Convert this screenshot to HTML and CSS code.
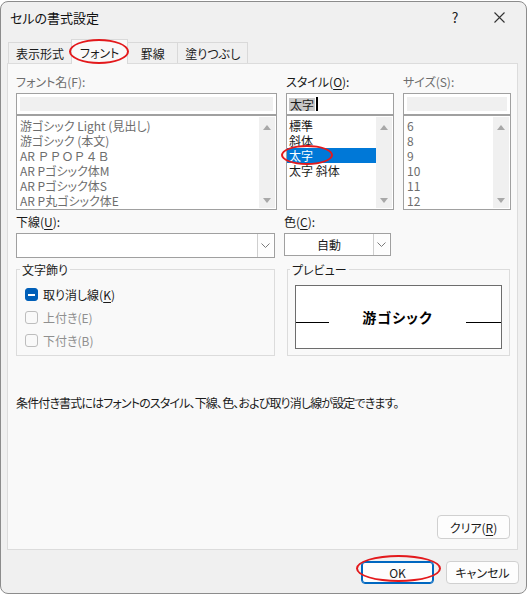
FILE: index.html
```html
<!DOCTYPE html>
<html lang="ja">
<head>
<meta charset="utf-8">
<title>セルの書式設定</title>
<link rel="stylesheet" href="styles.css">
</head>
<body>
<div class="dialog">
  <div class="titlebar">
    <span class="title">セルの書式設定</span>
    <span class="help">?</span>
    <svg class="close" width="11" height="11" viewBox="0 0 11 11"><path d="M0.5 0.5 L10.5 10.5 M10.5 0.5 L0.5 10.5" stroke="#333" stroke-width="1.1" fill="none"/></svg>
  </div>

  <div class="tabs">
    <div class="tab">表示形式</div>
    <div class="tab active">フォント</div>
    <div class="tab">罫線</div>
    <div class="tab">塗りつぶし</div>
  </div>

  <div class="panel">
    <div class="fonts">
      <div class="col">
        <div class="label dim">フォント名(F):</div>
        <div class="input disabled"><div class="fill"></div></div>
        <div class="list dim">
          <div class="items">
            <div class="item">游ゴシック Light (見出し)</div>
            <div class="item">游ゴシック (本文)</div>
            <div class="item wide">AR ＰＰＯＰ４Ｂ</div>
            <div class="item">AR Pゴシック体M</div>
            <div class="item">AR Pゴシック体S</div>
            <div class="item">AR P丸ゴシック体E</div>
          </div>
          <div class="scroll"><span class="up"></span><span class="down"></span></div>
        </div>
      </div>
      <div class="col">
        <div class="label">スタイル(<u>O</u>):</div>
        <div class="input"><span class="sel">太字</span><span class="caret"></span></div>
        <div class="list">
          <div class="items">
            <div class="item">標準</div>
            <div class="item">斜体</div>
            <div class="item selected">太字</div>
            <div class="item">太字 斜体</div>
          </div>
          <div class="scroll"><span class="up"></span><span class="down"></span></div>
        </div>
      </div>
      <div class="col">
        <div class="label dim">サイズ(S):</div>
        <div class="input disabled"><div class="fill"></div></div>
        <div class="list dim">
          <div class="items">
            <div class="item">6</div>
            <div class="item">8</div>
            <div class="item">9</div>
            <div class="item">10</div>
            <div class="item">11</div>
            <div class="item">12</div>
          </div>
          <div class="scroll"><span class="up"></span><span class="down"></span></div>
        </div>
      </div>
    </div>

    <div class="row2">
      <div class="underline-field">
        <div class="label">下線(<u>U</u>):</div>
        <div class="combo">
          <div class="combo-text"></div>
          <div class="combo-btn"><svg width="9" height="5" viewBox="0 0 9 5"><path d="M0.5 0.5 L4.5 4.5 L8.5 0.5" stroke="#7a7a7a" fill="none"/></svg></div>
        </div>
      </div>
      <div class="color-field">
        <div class="label">色(<u>C</u>):</div>
        <div class="combo small">
          <div class="combo-text center">自動</div>
          <div class="combo-btn"><svg width="9" height="5" viewBox="0 0 9 5"><path d="M0.5 0.5 L4.5 4.5 L8.5 0.5" stroke="#7a7a7a" fill="none"/></svg></div>
        </div>
      </div>
    </div>

    <div class="row3">
      <fieldset class="group effects">
        <legend>文字飾り</legend>
        <div class="check-row"><span class="box checked"></span><span>取り消し線(<u>K</u>)</span></div>
        <div class="check-row disabled"><span class="box"></span><span>上付き(E)</span></div>
        <div class="check-row disabled"><span class="box"></span><span>下付き(B)</span></div>
      </fieldset>
      <fieldset class="group preview">
        <legend>プレビュー</legend>
        <div class="preview-box">
          <span class="base left"></span>
          <span class="sample">游ゴシック</span>
          <span class="base right"></span>
        </div>
      </fieldset>
    </div>

    <p class="note">条件付き書式にはフォントのスタイル、下線、色、および取り消し線が設定できます。</p>

    <button class="btn clear">クリア(<u>R</u>)</button>
  </div>

  <div class="footer">
    <button class="btn default">OK</button>
    <button class="btn">キャンセル</button>
  </div>

  <span class="mark mark-tab"></span>
  <span class="mark mark-bold"></span>
  <span class="mark mark-ok"></span>
</div>
</body>
</html>
```
FILE: styles.css
```css
* { box-sizing: border-box; }
html, body { margin: 0; padding: 0; }
body {
  width: 527px;
  height: 595px;
  overflow: hidden;
  background: #ffffff;
  font-family: "Noto Sans CJK JP", "Noto Sans", sans-serif;
  font-size: 12px;
  color: #1a1a1a;
  font-feature-settings: "palt";
}
u { text-underline-offset: 2px; text-decoration-thickness: 1px; }

.dialog {
  position: relative;
  margin-top: 1px;
  width: 527px;
  height: 593px;
  background: #f0f0f0;
  border: 1px solid #8c8c8c;
  border-radius: 8px;
  display: flex;
  flex-direction: column;
}

.titlebar {
  height: 30px;
  display: flex;
  align-items: center;
  padding: 0 21px 0 9px;
}
.title { flex: 1; font-size: 13px; color: #111; }
.help { width: 20px; text-align: center; font-size: 14px; margin-right: 29px; color: #222; }
.close { display: block; }

.tabs {
  display: flex;
  align-items: flex-end;
  height: 24px;
  margin-top: 7px;
  padding-left: 7px;
}
.tab {
  height: 21px;
  min-width: 51px;
  padding: 0 7px;
  border: 1px solid #d9d9d9;
  border-bottom: none;
  background: #f0f0f0;
  display: flex;
  align-items: center;
  justify-content: center;
  margin-left: -1px;
  white-space: nowrap;
}
.tab:first-child { margin-left: 0; }
.tab.active {
  height: 25px;
  margin-bottom: -1px;
  background: #f9f9f9;
  position: relative;
  z-index: 1;
  padding: 0 8px;
}

.panel {
  margin-left: 6px;
  width: 511px;
  height: 487px;
  background: #f9f9f9;
  border: 1px solid #dcdcdc;
  padding: 9px 7px 10px 8px;
  display: flex;
  flex-direction: column;
}

.fonts {
  display: grid;
  grid-template-columns: 261px 108px 108px;
  column-gap: 9px;
}
.label {
  height: 18px;
  line-height: 18px;
  margin-bottom: 2px;
  white-space: nowrap;
}
.dim { color: #6d6d6d; }

.input {
  height: 22px;
  border: 1px solid #a0a0a0;
  background: #ffffff;
  padding: 3px;
  display: flex;
  align-items: center;
}
.input .fill { width: 100%; height: 100%; background: #f0f0f0; }
.input .sel { background: #c8c8c8; line-height: 13px; padding: 0 1px; margin-left: -1px; }
.input .caret { width: 2px; height: 14px; background: #000; margin-left: 1px; }

.list {
  height: 95px;
  border: 1px solid #a0a0a0;
  background: #ffffff;
  display: flex;
}
.items { flex: 1; padding-top: 2px; overflow: hidden; }
.item {
  height: 15px;
  line-height: 15px;
  padding-left: 2px;
  white-space: nowrap;
}
.list.dim .item { padding-left: 3px; }
.item.wide { font-feature-settings: normal; }
.item.selected { background: #0078d7; color: #ffffff; }
.scroll {
  width: 16px;
  margin: 1px 1px 1px 0;
  background: #f0f0f0;
  display: flex;
  flex-direction: column;
  justify-content: space-between;
  align-items: center;
  padding: 8px 0 5px;
}
.up, .down { width: 0; height: 0; border-left: 4px solid transparent; border-right: 4px solid transparent; }
.up { border-bottom: 5px solid #a8a8a8; }
.down { border-top: 5px solid #a8a8a8; }

.row2 { display: flex; gap: 9px; margin-top: 3px; }
.underline-field { width: 259px; }
.color-field { width: 107px; }
.combo {
  height: 25px;
  border: 1px solid #a0a0a0;
  background: #ffffff;
  display: flex;
}
.combo.small { height: 23px; margin-top: 1px; }
.combo-text { flex: 1; line-height: 21px; }
.combo-text.center { text-align: center; }
.combo-btn {
  width: 16px;
  margin: 0 1px 0 0;
  border-left: 1px solid #cfcfcf;
  background: #fdfdfd;
  display: flex;
  align-items: center;
  justify-content: center;
}

.row3 { display: flex; gap: 12px; margin-top: 4px; }
.group {
  margin: 0;
  height: 94px;
  border: 1px solid #dcdcdc;
  padding: 6px 8px 0 8px;
}
.group legend {
  padding: 0 2px;
  margin-left: -5px;
  line-height: 15px;
}
.effects { width: 259px; }
.preview { width: 223px; padding: 8px 7px 0 7px; }

.check-row {
  height: 23px;
  display: flex;
  align-items: center;
  gap: 5px;
}
.check-row.disabled { color: #8f8f8f; }
.box {
  width: 13px;
  height: 13px;
  border: 1px solid #bdbdbd;
  border-radius: 3px;
  display: flex;
  align-items: center;
  justify-content: center;
}
.box.checked { background: #005fb8; border-color: #005fb8; }
.box.checked::after { content: ""; width: 7px; height: 2px; background: #ffffff; }

.preview-box {
  height: 64px;
  background: #ffffff;
  border: 1px solid #6d6d6d;
  display: flex;
  align-items: center;
  justify-content: space-between;
}
.sample { font-size: 14px; font-weight: bold; color: #000; letter-spacing: 1px; }
.base { height: 1px; background: #000; margin-top: 11px; }
.base.left { width: 33px; }
.base.right { width: 35px; }

.note { margin: 39px 0 0 0; line-height: 16px; color: #1a1a1a; letter-spacing: -0.85px; white-space: nowrap; }

.btn {
  font-family: inherit;
  font-size: 12px;
  font-feature-settings: "palt";
  color: #1a1a1a;
  background: #fdfdfd;
  border: 1px solid #d0d0d0;
  border-radius: 4px;
  width: 73px;
  height: 23px;
  padding: 0;
}
.clear { margin-top: auto; align-self: flex-end; height: 24px; }

.footer {
  display: flex;
  justify-content: flex-end;
  gap: 12px;
  padding: 11px 7px 0 0;
}
.btn.default { border-color: #0067c0; box-shadow: inset 0 0 0 1px #0067c0; }

.mark {
  position: absolute;
  border: 2px solid #e3191c;
  border-radius: 50%;
  pointer-events: none;
  z-index: 5;
}
.mark-tab { left: 68px; top: 37px; width: 60px; height: 25px; }
.mark-bold { left: 280px; top: 143px; width: 52px; height: 20px; }
.mark-ok { left: 355px; top: 553px; width: 85px; height: 27px; }
```
